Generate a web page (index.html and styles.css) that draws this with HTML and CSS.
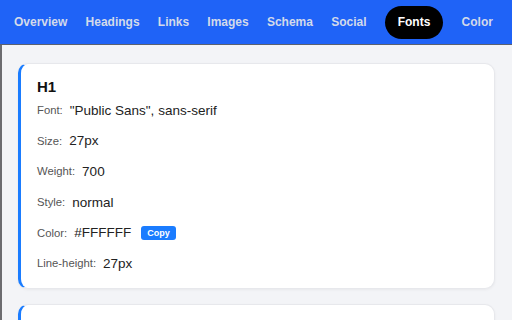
FILE: index.html
```html
<!DOCTYPE html>
<html lang="en">
<head>
    <meta charset="UTF-8">
    <title>Fonts</title>
    <link rel="stylesheet" href="styles.css">
</head>
<body>
    <nav class="tabs">
        <span class="tab">Overview</span>
        <span class="tab">Headings</span>
        <span class="tab">Links</span>
        <span class="tab">Images</span>
        <span class="tab">Schema</span>
        <span class="tab">Social</span>
        <span class="tab active">Fonts</span>
        <span class="tab">Color</span>
    </nav>

    <main class="content">
        <div class="font-card">
            <h2 class="font-tag">H1</h2>
            <div class="font-row"><span class="label">Font:</span><span class="value">"Public Sans", sans-serif</span></div>
            <div class="font-row"><span class="label">Size:</span><span class="value">27px</span></div>
            <div class="font-row"><span class="label">Weight:</span><span class="value">700</span></div>
            <div class="font-row"><span class="label">Style:</span><span class="value">normal</span></div>
            <div class="font-row"><span class="label">Color:</span><span class="value">#FFFFFF</span><button class="copy-btn">Copy</button></div>
            <div class="font-row"><span class="label">Line-height:</span><span class="value">27px</span></div>
        </div>
        <div class="font-card"></div>
    </main>
</body>
</html>
```

FILE: styles.css
```css
html, body {
    margin: 0;
    padding: 0;
    height: 100%;
    overflow: hidden;
}
body {
    font-family: "Liberation Sans", Arial, sans-serif;
    background: #f3f4f7;
    color: #222;
}
.tabs {
    display: flex;
    justify-content: space-between;
    align-items: center;
    height: 44px;
    padding: 0 19px 0 14px;
    background: #1f63f7;
    border-bottom: 1px solid #5a6170;
}
.tab {
    padding: 9px 0;
    border-radius: 17px;
    color: #d3daea;
    font-size: 12px;
    font-weight: bold;
    line-height: 15px;
}
.tab.active {
    padding: 9px 13px;
    background: #000;
    color: #fff;
}
.content {
    height: 100%;
    padding: 18px 17px 0 16px;
    border-left: 2px solid #6c6c70;
}
.font-card {
    min-height: 40px;
    background: #fff;
    border: 1px solid #e7e8ec;
    border-left: 3px solid #1a7cff;
    border-radius: 10px;
    padding: 13px 18px 15px 16px;
    margin-bottom: 15px;
    box-shadow: 0 1px 3px rgba(0, 0, 0, 0.05);
}
.font-tag {
    margin: 0;
    font-size: 15px;
    line-height: 20px;
    color: #111;
}
.font-row {
    display: flex;
    align-items: center;
    height: 20px;
    margin-top: 10.7px;
}
.font-tag + .font-row {
    margin-top: 3px;
}
.label {
    font-size: 11.3px;
    color: #555;
    margin-right: 7px;
}
.value {
    font-size: 13.5px;
    color: #222;
}
.copy-btn {
    margin-left: 10px;
    padding: 1px 6px;
    border: none;
    border-radius: 3px;
    background: #1a7cff;
    color: #fff;
    font-family: inherit;
    font-size: 9px;
    font-weight: bold;
    line-height: 12px;
}
```
